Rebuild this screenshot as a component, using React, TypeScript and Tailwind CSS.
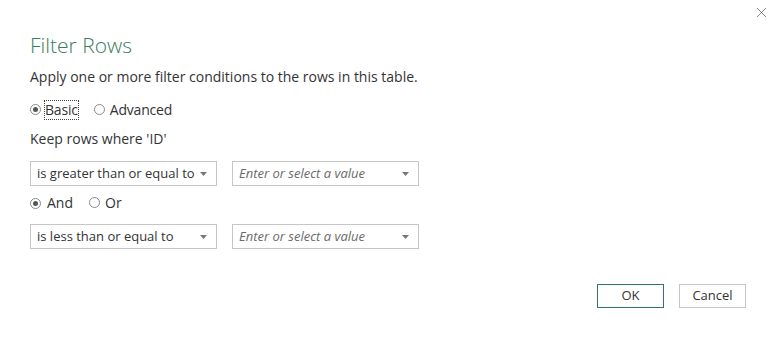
// Filter Rows dialog
import { X } from "lucide-react"

function Radio({ checked }: { checked?: boolean }) {
  return (
    <span className="inline-flex h-[11px] w-[11px] items-center justify-center rounded-full border border-[#8a8a8a] bg-white">
      {checked && <span className="h-[5px] w-[5px] rounded-full bg-[#555]" />}
    </span>
  )
}

function Caret() {
  return (
    <svg width="7" height="4" viewBox="0 0 7 4" className="shrink-0">
      <path d="M0 0h7L3.5 4z" fill="#777" />
    </svg>
  )
}

function Select({ value, placeholder }: { value?: string; placeholder?: string }) {
  return (
    <div className="flex h-[25px] w-[187px] items-center justify-between border border-[#c6c6c6] bg-white pl-[6px] pr-[9px]">
      {value ? (
        <span className="text-[#333]">{value}</span>
      ) : (
        <span className="italic text-[#6a6a6a]">{placeholder}</span>
      )}
      <Caret />
    </div>
  )
}

function ConditionRow({ op }: { op: string }) {
  return (
    <div className="flex gap-[15px]">
      <Select value={op} />
      <Select placeholder="Enter or select a value" />
    </div>
  )
}

export default function App() {
  return (
    <div
      className="relative h-[339px] w-[780px] overflow-hidden bg-white text-[13px] text-[#333]"
      style={{ fontFamily: "'Segoe UI', 'Open Sans', sans-serif" }}
    >
      <button className="absolute right-[10px] top-[4px] text-[#666]">
        <X size={17} strokeWidth={1.1} />
      </button>

      <div className="flex flex-col pl-[30px] pt-[29px]">
        <h1 className="text-[21px] font-light leading-[32px] text-[#3a7d5c]">Filter Rows</h1>
        <p className="mt-[6px] text-[14px] leading-[20px]">
          Apply one or more filter conditions to the rows in this table.
        </p>

        <div className="mt-[12px] flex items-center text-[14px]">
          <Radio checked />
          <span className="ml-[3px] border border-dotted border-[#444] leading-[18px] tracking-[-0.2px]">Basic</span>
          <span className="ml-[15px]"><Radio /></span>
          <span className="ml-[5px] leading-[18px] tracking-[-0.2px]">Advanced</span>
        </div>

        <p className="mt-[9px] text-[14px] leading-[20px]">Keep rows where 'ID'</p>

        <div className="mt-[12px]">
          <ConditionRow op="is greater than or equal to" />
        </div>

        <div className="mt-[7px] flex items-center text-[14px] leading-[20px]">
          <Radio checked />
          <span className="ml-[6px]">And</span>
          <span className="ml-[16px]"><Radio /></span>
          <span className="ml-[5px]">Or</span>
        </div>

        <div className="mt-[11px]">
          <ConditionRow op="is less than or equal to" />
        </div>
      </div>

      <div className="flex justify-end gap-[15px] pr-[34px] pt-[35px]">
        <button className="h-[24px] w-[67px] border border-[#2f7a57] bg-white text-[13px] text-[#333]">OK</button>
        <button className="h-[24px] w-[67px] border border-[#c6c6c6] bg-white text-[13px] text-[#333]">Cancel</button>
      </div>
    </div>
  )
}
